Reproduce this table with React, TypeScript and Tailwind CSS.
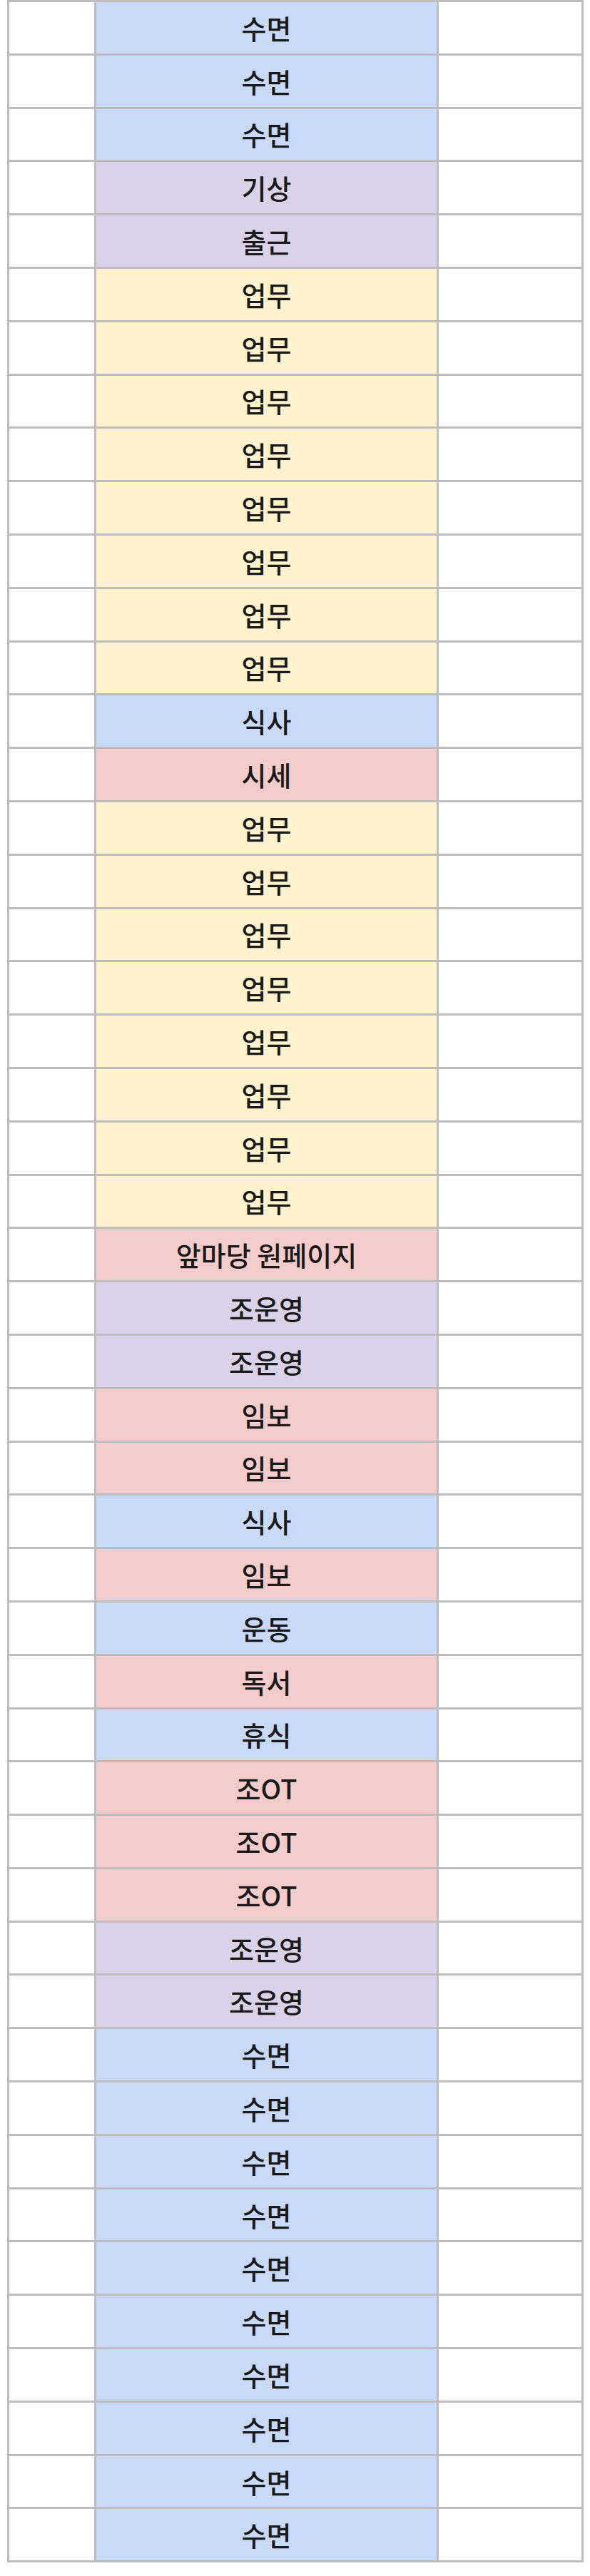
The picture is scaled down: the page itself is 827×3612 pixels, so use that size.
import React from "react";

type Kind = "blue" | "purple" | "yellow" | "red";

const rows: [string, Kind][] = [
  ["수면", "blue"],
  ["수면", "blue"],
  ["수면", "blue"],
  ["기상", "purple"],
  ["출근", "purple"],
  ["업무", "yellow"],
  ["업무", "yellow"],
  ["업무", "yellow"],
  ["업무", "yellow"],
  ["업무", "yellow"],
  ["업무", "yellow"],
  ["업무", "yellow"],
  ["업무", "yellow"],
  ["식사", "blue"],
  ["시세", "red"],
  ["업무", "yellow"],
  ["업무", "yellow"],
  ["업무", "yellow"],
  ["업무", "yellow"],
  ["업무", "yellow"],
  ["업무", "yellow"],
  ["업무", "yellow"],
  ["업무", "yellow"],
  ["앞마당 원페이지", "red"],
  ["조운영", "purple"],
  ["조운영", "purple"],
  ["임보", "red"],
  ["임보", "red"],
  ["식사", "blue"],
  ["임보", "red"],
  ["운동", "blue"],
  ["독서", "red"],
  ["휴식", "blue"],
  ["조OT", "red"],
  ["조OT", "red"],
  ["조OT", "red"],
  ["조운영", "purple"],
  ["조운영", "purple"],
  ["수면", "blue"],
  ["수면", "blue"],
  ["수면", "blue"],
  ["수면", "blue"],
  ["수면", "blue"],
  ["수면", "blue"],
  ["수면", "blue"],
  ["수면", "blue"],
  ["수면", "blue"],
  ["수면", "blue"],
];

const bg: Record<Kind, string> = {
  blue: "bg-[#c9daf8]",
  purple: "bg-[#d9d2e9]",
  yellow: "bg-[#fff2cc]",
  red: "bg-[#f4cccc]",
};

export default function App() {
  return (
    <div
      className="w-[827px] h-[3612px] bg-white"
      style={{ fontFamily: '"Noto Sans CJK KR", "Noto Sans", sans-serif' }}
    >
      <div className="ml-[10px] w-[808px] border-l-[3px] border-t-[3px] border-[#bdbdbd] flex flex-col">
        {rows.map(([label, kind], i) => (
          <div
            key={i}
            className="flex h-[74.8px] border-b-[3px] border-[#bdbdbd]"
          >
            <div className="w-[122px] border-r-[3px] border-[#bdbdbd] bg-white" />
            <div
              className={`w-[480px] border-r-[3px] border-[#bdbdbd] ${bg[kind]} flex items-center justify-center text-[38px] font-medium text-[#1a1a1a] leading-none`}
            >
              {label}
            </div>
            <div className="w-[203px] border-r-[3px] border-[#bdbdbd] bg-white" />
          </div>
        ))}
      </div>
    </div>
  );
}
